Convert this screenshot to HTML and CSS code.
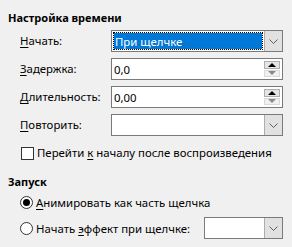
FILE: index.html
```html
<!DOCTYPE html>
<html lang="ru">
<head>
    <meta charset="UTF-8">
    <title>Настройка времени</title>
    <link rel="stylesheet" href="styles.css">
</head>
<body>
    <div class="panel">
        <div class="section-title">Настройка времени</div>

        <div class="fields">
            <label class="field-label"><u>Н</u>ачать:</label>
            <div class="combo focused">
                <span class="value"><span class="value-text">При щелчке</span></span>
                <span class="drop">
                    <svg width="9" height="5" viewBox="0 0 9 5"><polyline points="0.5,0.5 4.5,4.5 8.5,0.5" fill="none" stroke="#606060" stroke-width="1"/></svg>
                </span>
            </div>

            <label class="field-label"><u>З</u>адержка:</label>
            <div class="spin">
                <span class="value">0,0</span>
                <span class="spin-buttons">
                    <span class="spin-up"><span class="tri-up"></span></span>
                    <span class="spin-down"><span class="tri-down"></span></span>
                </span>
            </div>

            <label class="field-label"><u>Д</u>лительность:</label>
            <div class="spin">
                <span class="value">0,00</span>
                <span class="spin-buttons">
                    <span class="spin-up"><span class="tri-up"></span></span>
                    <span class="spin-down"><span class="tri-down"></span></span>
                </span>
            </div>

            <label class="field-label"><u>П</u>овторить:</label>
            <div class="combo">
                <span class="value"></span>
                <span class="drop">
                    <svg width="9" height="5" viewBox="0 0 9 5"><polyline points="0.5,0.5 4.5,4.5 8.5,0.5" fill="none" stroke="#606060" stroke-width="1"/></svg>
                </span>
            </div>
        </div>

        <label class="check-row"><span class="checkbox"></span><span>Перейти <u>к</u> началу после воспроизведения</span></label>

        <div class="section-title second">Запуск</div>

        <div class="radio-row first"><span class="radio checked"></span><span><u>А</u>нимировать как часть щелчка</span></div>
        <div class="radio-row">
            <span class="radio"></span><span>Начать <u>э</u>ффект при щелчке:</span>
            <div class="combo small">
                <span class="value"></span>
                <span class="drop">
                    <svg width="9" height="5" viewBox="0 0 9 5"><polyline points="0.5,0.5 4.5,4.5 8.5,0.5" fill="none" stroke="#606060" stroke-width="1"/></svg>
                </span>
            </div>
        </div>
    </div>
</body>
</html>
```

FILE: styles.css
```css
/* General */
body {
    margin: 0;
    background: #f0f0f0;
    font-family: 'Noto Sans', 'Open Sans', sans-serif;
    font-size: 11.4px;
    color: #000;
}

.panel {
    padding: 10px 9px 0 8px;
}

u {
    text-decoration-thickness: 1px;
    text-underline-offset: 2px;
}

.section-title {
    font-weight: bold;
    font-size: 11px;
    line-height: 15px;
}

.section-title.second {
    margin-top: 13px;
}

/* Form rows */
.fields {
    display: grid;
    grid-template-columns: 91px 172px;
    row-gap: 6px;
    margin-top: 5px;
    padding-left: 12px;
    align-items: center;
}

.field-label {
    line-height: 22px;
}

.combo,
.spin {
    display: flex;
    height: 22px;
    box-sizing: border-box;
    border: 1px solid #7a7a7a;
    background: #fff;
}

.value {
    flex: 1;
    display: flex;
    align-items: center;
    padding-left: 2px;
    overflow: hidden;
    white-space: nowrap;
}

.combo.focused .value {
    padding: 0;
    margin: 1px;
    border: 1px dotted #000;
    background: linear-gradient(#0078d7, #0078d7) padding-box, linear-gradient(#fff, #fff) border-box;
    color: #fff;
}

.combo.focused .value-text {
    padding-left: 1px;
}

.drop {
    width: 17px;
    display: flex;
    align-items: center;
    justify-content: center;
    background: #e1e1e1;
    border-left: 1px solid #adadad;
}

/* Spin buttons */
.spin-buttons {
    width: 16px;
    display: flex;
    flex-direction: column;
    padding: 2px 2px 2px 0;
    gap: 1px;
}

.spin-up,
.spin-down {
    flex: 1;
    display: flex;
    align-items: center;
    justify-content: center;
    box-sizing: border-box;
}

.spin-up {
    background: #e5e5e5;
    border: 1px solid #adadad;
}

.spin-down {
    background: #f0f0f0;
    border: 1px solid #d9d9d9;
}

.tri-up {
    width: 0;
    height: 0;
    border-left: 4px solid transparent;
    border-right: 4px solid transparent;
    border-bottom: 4px solid #000;
}

.tri-down {
    width: 0;
    height: 0;
    border-left: 4px solid transparent;
    border-right: 4px solid transparent;
    border-top: 4px solid #8a8a8a;
}

/* Checkbox and radios */
.check-row {
    display: flex;
    align-items: center;
    gap: 3px;
    margin-top: 9px;
    padding-left: 13px;
    line-height: 16px;
}

.checkbox {
    width: 13px;
    height: 13px;
    box-sizing: border-box;
    border: 1px solid #333;
    background: #fff;
}

.radio-row {
    display: flex;
    align-items: center;
    gap: 3px;
    padding-left: 12px;
    height: 22px;
    margin-top: 4px;
}

.radio-row.first {
    margin-top: 2px;
}

.radio {
    width: 13px;
    height: 13px;
    box-sizing: border-box;
    border: 1px solid #333;
    border-radius: 50%;
    background: #fff;
    display: flex;
    align-items: center;
    justify-content: center;
}

.radio.checked::after {
    content: "";
    width: 7px;
    height: 7px;
    border-radius: 50%;
    background: #000;
}

.combo.small {
    width: 79px;
    margin-left: auto;
}
```
